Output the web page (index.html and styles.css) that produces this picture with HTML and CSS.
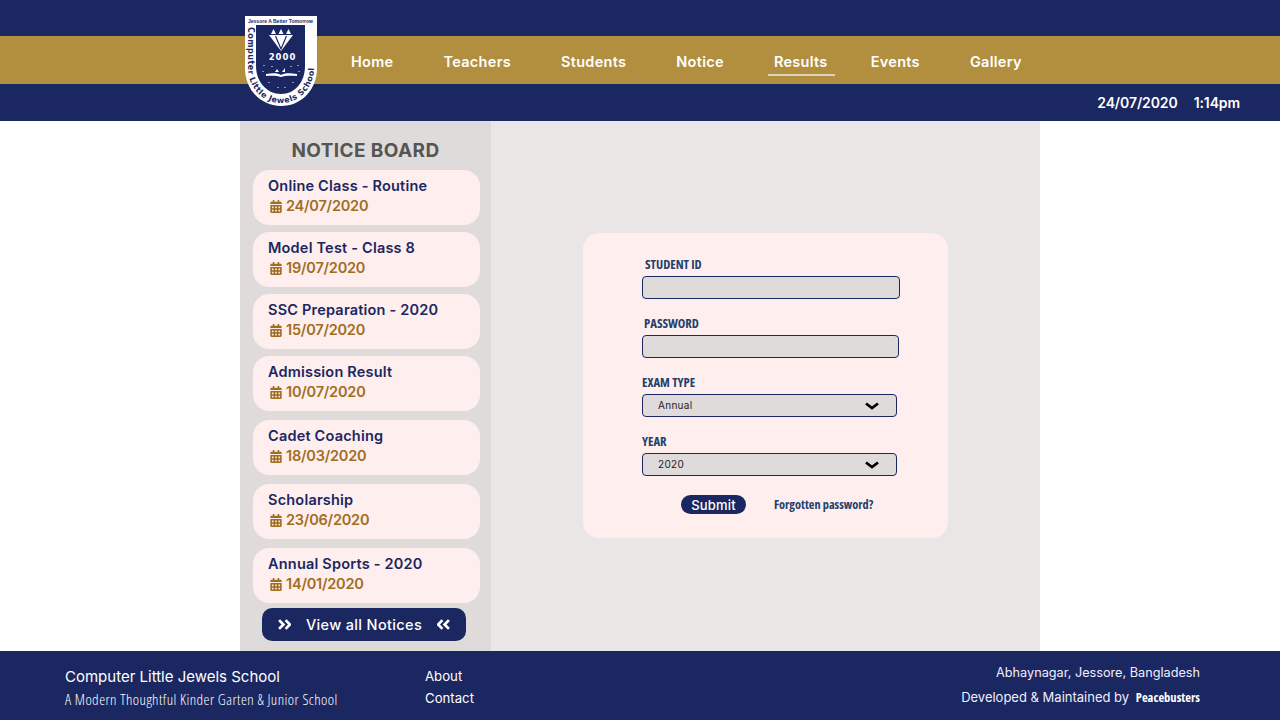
FILE: index.html
```html
<!DOCTYPE html>
<html lang="en">
<head>
    <meta charset="UTF-8">
    <meta name="viewport" content="width=device-width, initial-scale=1.0">
    <title>Results - Computer Little Jewels School</title>
    <link rel="stylesheet" href="styles.css">
</head>
<body>
    <svg class="sprite" width="0" height="0">
        <symbol id="cal" viewBox="0 0 448 512">
            <path d="M0 464c0 26.500 21.500 48 48 48h352c26.500 0 48-21.500 48-48V192H0v272zm320-196c0-6.600 5.400-12 12-12h40c6.600 0 12 5.400 12 12v40c0 6.600-5.400 12-12 12h-40c-6.600 0-12-5.400-12-12v-40zm0 128c0-6.600 5.400-12 12-12h40c6.600 0 12 5.400 12 12v40c0 6.600-5.400 12-12 12h-40c-6.600 0-12-5.400-12-12v-40zM192 268c0-6.600 5.400-12 12-12h40c6.600 0 12 5.400 12 12v40c0 6.600-5.400 12-12 12h-40c-6.600 0-12-5.400-12-12v-40zm0 128c0-6.600 5.400-12 12-12h40c6.600 0 12 5.400 12 12v40c0 6.600-5.400 12-12 12h-40c-6.600 0-12-5.400-12-12v-40zM64 268c0-6.600 5.400-12 12-12h40c6.600 0 12 5.400 12 12v40c0 6.600-5.400 12-12 12H76c-6.600 0-12-5.400-12-12v-40zm0 128c0-6.600 5.400-12 12-12h40c6.600 0 12 5.400 12 12v40c0 6.600-5.400 12-12 12H76c-6.600 0-12-5.400-12-12v-40zM400 64h-48V16c0-8.800-7.200-16-16-16h-32c-8.800 0-16 7.200-16 16v48H160V16c0-8.800-7.200-16-16-16h-32c-8.800 0-16 7.200-16 16v48H48C21.500 64 0 85.500 0 112v48h448v-48c0-26.500-21.500-48-48-48z"/>
        </symbol>
    </svg>

    <header class="header">
        <div class="header-top"></div>
        <nav class="nav">
            <a href="#">Home</a>
            <a href="#">Teachers</a>
            <a href="#">Students</a>
            <a href="#">Notice</a>
            <a href="#" class="active">Results</a>
            <a href="#">Events</a>
            <a href="#">Gallery</a>
        </nav>
        <div class="header-bottom">
            <span>24/07/2020</span>
            <span>1:14pm</span>
        </div>

        <!-- School crest -->
        <svg class="logo" width="72" height="90" viewBox="0 0 72 90">
            <path d="M0 0H72V52C72 74 56 90 36 90C16 90 0 74 0 52Z" fill="#fff"/>
            <path d="M11 9H60V50C60 66 50 78 36 78C22 78 11 66 11 50Z" fill="#1b2760"/>
            <text x="35.500" y="7" class="logo-motto" text-anchor="middle" textLength="65" lengthAdjust="spacingAndGlyphs">Jessore A Better Tomorrow</text>
            <path id="logoArc" d="M3 11V52C3 72 18 87 36 87C54 87 69 72 69 52V11" fill="none"/>
            <text class="logo-ring"><textPath href="#logoArc" textLength="148" lengthAdjust="spacing">Computer Little Jewels School</textPath></text>
            <path d="M24 19H48L36 35Z" fill="#fff"/>
            <path d="M30.500 20L36 33L41.500 20" fill="none" stroke="#1b2760" stroke-width="1.200"/>
            <path d="M26 18l2.500-5 2.500 5zM33.500 18l2.500-5 2.500 5zM41 18l2.500-5 2.500 5z" fill="#fff"/>
            <text x="37.500" y="44" class="logo-year" text-anchor="middle">2000</text>
            <path d="M21 58C28 57 33 57 36 59C39 57 44 57 52 58V60C44 59.500 39 60 36 61C33 60 28 59.500 21 60Z" fill="#fff"/>
            <path d="M30 56l2-3 2 3zM37 56h3v-4z" fill="#fff"/>
            <path d="M19 49v1M18 55v1M53 49v1M54 55v1M27 50v1M46 50v1M24 66v1M48 66v1M33 71v1M40 71v1" stroke="#fff" stroke-width="1"/>
        </svg>
    </header>

    <main class="main">
        <aside class="sidebar">
            <h2 class="board-title">NOTICE BOARD</h2>
            <div class="notices">
                <a href="#" class="notice">
                    <span class="notice-title">Online Class - Routine</span>
                    <span class="notice-date"><svg class="cal"><use href="#cal"/></svg>24/07/2020</span>
                </a>
                <a href="#" class="notice">
                    <span class="notice-title">Model Test - Class 8</span>
                    <span class="notice-date"><svg class="cal"><use href="#cal"/></svg>19/07/2020</span>
                </a>
                <a href="#" class="notice">
                    <span class="notice-title">SSC Preparation - 2020</span>
                    <span class="notice-date"><svg class="cal"><use href="#cal"/></svg>15/07/2020</span>
                </a>
                <a href="#" class="notice">
                    <span class="notice-title">Admission Result</span>
                    <span class="notice-date"><svg class="cal"><use href="#cal"/></svg>10/07/2020</span>
                </a>
                <a href="#" class="notice spaced">
                    <span class="notice-title">Cadet Coaching</span>
                    <span class="notice-date"><svg class="cal"><use href="#cal"/></svg>18/03/2020</span>
                </a>
                <a href="#" class="notice spaced">
                    <span class="notice-title">Scholarship</span>
                    <span class="notice-date"><svg class="cal"><use href="#cal"/></svg>23/06/2020</span>
                </a>
                <a href="#" class="notice spaced">
                    <span class="notice-title">Annual Sports - 2020</span>
                    <span class="notice-date"><svg class="cal"><use href="#cal"/></svg>14/01/2020</span>
                </a>
            </div>
            <a href="#" class="view-all">
                <svg class="angles" viewBox="1 1 12 10"><path d="M2 2l4 4-4 4M8 2l4 4-4 4"/></svg>
                <span>View all Notices</span>
                <svg class="angles" viewBox="1 1 12 10"><path d="M6 2L2 6l4 4M12 2L8 6l4 4"/></svg>
            </a>
        </aside>

        <section class="content">
            <form class="result-form">
                <div class="field field-id">
                    <label for="studentId">STUDENT ID</label>
                    <input type="text" id="studentId">
                </div>
                <div class="field field-pass">
                    <label for="password">PASSWORD</label>
                    <input type="password" id="password">
                </div>
                <div class="field field-select">
                    <label for="examType">EXAM TYPE</label>
                    <div class="select-wrap">
                        <select id="examType"><option>Annual</option></select>
                        <svg class="chevron" viewBox="0 0 16 8"><path d="M2 1.500L8 6l6-4.500"/></svg>
                    </div>
                </div>
                <div class="field field-select">
                    <label for="year">YEAR</label>
                    <div class="select-wrap">
                        <select id="year"><option>2020</option></select>
                        <svg class="chevron" viewBox="0 0 16 8"><path d="M2 1.500L8 6l6-4.500"/></svg>
                    </div>
                </div>
                <div class="form-actions">
                    <button type="button" class="submit">Submit</button>
                    <a href="#" class="forgot">Forgotten password?</a>
                </div>
            </form>
        </section>
    </main>

    <footer class="footer">
        <div class="footer-school">
            <p class="school-name">Computer Little Jewels School</p>
            <p class="school-tag">A Modern Thoughtful Kinder Garten &amp; Junior School</p>
        </div>
        <div class="footer-links">
            <a href="#">About</a>
            <a href="#">Contact</a>
        </div>
        <div class="footer-right">
            <p class="address">Abhaynagar, Jessore, Bangladesh</p>
            <p>Developed &amp; Maintained by <b class="brand">Peacebusters</b></p>
        </div>
    </footer>
</body>
</html>
```

FILE: styles.css
```css
/* Base */
body {
    margin: 0;
    font-family: Inter, "Noto Sans", sans-serif;
    background-color: #fff;
    color: #1b2760;
}

a {
    text-decoration: none;
    color: inherit;
}

p {
    margin: 0;
}

.sprite {
    position: absolute;
}

/* Header */
.header {
    position: relative;
    height: 121px;
    background-color: #1b2760;
    color: #fff;
}

.header-top {
    height: 36px;
}

.nav {
    height: 48px;
    background-color: #b18f3e;
    display: flex;
    align-items: center;
    padding-left: 351px;
    gap: 50px;
    box-sizing: border-box;
}

.nav a {
    font-size: 14.500px;
    font-weight: 600;
    letter-spacing: 0.3px;
    line-height: 28px;
    margin-top: 4px;
}

.nav a.active {
    margin: 4px -14px 0 -6px;
    padding: 0 7px 0 6px;
    border-bottom: 2px solid #ddd3b8;
    height: 26px;
}

.header-bottom {
    height: 37px;
    display: flex;
    justify-content: flex-end;
    align-items: center;
    gap: 16px;
    padding-right: 40px;
    font-size: 14px;
    letter-spacing: -0.1px;
    font-weight: 600;
}

.logo {
    position: absolute;
    left: 245px;
    top: 16px;
    overflow: visible;
}

.logo-motto {
    font-family: "Liberation Sans", sans-serif;
    font-size: 6.200px;
    font-weight: 700;
    fill: #1b2760;
}

.logo-ring {
    font-family: "DejaVu Sans", sans-serif;
    font-size: 8px;
    font-weight: 700;
    fill: #1b2760;
}

.logo-year {
    font-family: "DejaVu Sans", sans-serif;
    font-size: 8.500px;
    letter-spacing: 1px;
    font-weight: 700;
    fill: #fff;
}

/* Main area */
.main {
    width: 800px;
    height: 530px;
    margin: 0 auto;
    display: flex;
    background-color: #ebe6e6;
}

.sidebar {
    width: 251px;
    box-sizing: border-box;
    padding: 18px 0 0 13px;
    background-color: #e0dbdb;
}

.board-title {
    margin: 0 0 8px;
    width: 225px;
    text-align: center;
    font-size: 19px;
    letter-spacing: 0.4px;
    line-height: 23px;
    font-weight: 700;
    color: #555;
}

.notices {
    display: flex;
    flex-direction: column;
    gap: 7px;
}

.notice {
    width: 227px;
    height: 55px;
    box-sizing: border-box;
    padding: 6px 15px 0;
    background-color: #feeeee;
    border-radius: 16px;
    display: block;
}

.notice.spaced {
    margin-top: 2px;
}

.notice-title,
.notice-date {
    display: block;
    font-size: 14.500px;
    line-height: 20px;
    font-weight: 600;
}

.notice-title {
    letter-spacing: 0.2px;
}

.notice-date {
    color: #a06d21;
    display: flex;
    align-items: center;
    letter-spacing: -0.2px;
}

.cal {
    width: 12px;
    height: 13px;
    fill: #a06d21;
    margin: 0 4px 0 2px;
}

.view-all {
    width: 204px;
    height: 33px;
    margin: 5px 0 0 9px;
    display: flex;
    align-items: center;
    justify-content: center;
    gap: 15px;
    background-color: #1b2760;
    color: #fff;
    border-radius: 10px;
    font-size: 14.500px;
    letter-spacing: 0.35px;
    font-weight: 500;
}

.angles {
    width: 13px;
    height: 11px;
    fill: none;
    stroke: #fff;
    stroke-width: 2.500;
}

/* Result form */
.content {
    flex: 1;
    padding: 112px 0 0 92px;
}

.result-form {
    width: 365px;
    height: 305px;
    box-sizing: border-box;
    padding: 22px 0 0 59px;
    background-color: #feeeee;
    border-radius: 16px;
}

.field {
    margin-bottom: 15px;
}

.field label {
    display: block;
    height: 18px;
    margin-bottom: 3px;
    font-family: "Open Sans", "Liberation Sans", sans-serif;
    font-stretch: 75%;
    font-size: 12.700px;
    line-height: 18px;
    font-weight: 700;
    color: #24406a;
}

.field-id label {
    padding-left: 3px;
}

.field-pass label {
    padding-left: 2px;
}

.field input,
.field select {
    display: block;
    height: 23px;
    box-sizing: border-box;
    border: 1px solid #1b2760;
    border-radius: 4px;
    background-color: #e0dbdb;
    outline: none;
}

.field-id input {
    width: 258px;
}

.field-pass input {
    width: 257px;
}

.select-wrap {
    position: relative;
    width: 255px;
}

.field select {
    width: 100%;
    padding: 0 0 2px 15px;
    appearance: none;
    font-family: Inter, sans-serif;
    font-size: 10px;
    letter-spacing: 0.3px;
    color: #222;
}

.chevron {
    position: absolute;
    right: 17px;
    top: 8px;
    width: 16px;
    height: 8px;
    fill: none;
    stroke: #000;
    stroke-width: 2.800;
}

.form-actions {
    display: flex;
    align-items: center;
    gap: 28px;
    padding-left: 39px;
    margin-top: 19px;
}

.submit {
    width: 65px;
    height: 19px;
    padding: 0;
    border: none;
    border-radius: 10px;
    background-color: #1b2760;
    color: #fff;
    font-family: Inter, sans-serif;
    font-size: 13px;
    letter-spacing: 0.2px;
    font-weight: 500;
    cursor: pointer;
}

.forgot {
    font-family: "Open Sans", "Liberation Sans", sans-serif;
    font-stretch: 75%;
    font-size: 12.300px;
    font-weight: 700;
    color: #24406a;
}

/* Footer */
.footer {
    height: 69px;
    background-color: #1b2760;
    color: #fff;
    display: flex;
    position: relative;
    box-sizing: border-box;
    padding: 0 80px 0 65px;
}

.footer-school {
    width: 360px;
    padding-top: 16px;
}

.school-name {
    font-size: 15px;
    line-height: 20px;
}

.school-tag {
    font-family: "Open Sans", sans-serif;
    font-stretch: 75%;
    font-weight: 300;
    font-size: 15px;
    letter-spacing: 0.45px;
    line-height: 20px;
    margin-top: 2px;
}

.footer-links {
    padding-top: 17px;
    display: flex;
    flex-direction: column;
    gap: 6px;
    font-size: 13.200px;
    line-height: 16px;
}

.footer-right {
    margin-left: auto;
    padding-top: 12px;
    text-align: right;
    font-size: 13px;
    line-height: 20px;
    color: #eef;
}

.address {
    font-size: 12.700px;
}

.footer-right p + p {
    margin-top: 4px;
}

.brand {
    font-family: "Open Sans", "Liberation Sans", sans-serif;
    font-stretch: 75%;
    font-size: 12.500px;
    margin-left: 3px;
    color: #fff;
}
```
